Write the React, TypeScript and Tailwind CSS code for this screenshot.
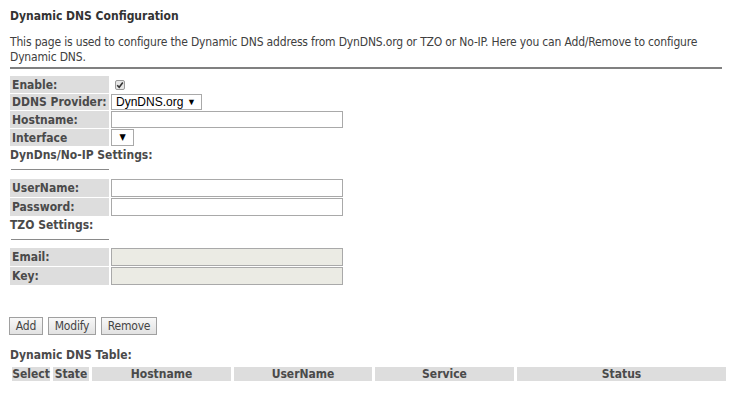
import React from 'react';

const font = 'font-["DejaVu_Sans_Condensed","DejaVu_Sans",sans-serif]';

const Label: React.FC<{ children: React.ReactNode; h?: string }> = ({ children, h = 'h-[17px]' }) => (
  <td className={`w-[99px] ${h} bg-[#dddddd] px-[2px] align-middle font-bold text-[#4a4a4a] whitespace-nowrap leading-none`}>
    {children}
  </td>
);

const TextBox: React.FC<{ disabled?: boolean }> = ({ disabled }) => (
  <div
    className={`w-[232px] h-[18px] border border-[#a9a9a9] ${disabled ? 'bg-[#ebebe4]' : 'bg-white'}`}
  />
);

const Caret = () => <span className="text-[9px] text-black leading-none">▼</span>;

const SectionTitle: React.FC<{ children: React.ReactNode }> = ({ children }) => (
  <div className="pt-[1px]">
    <div className="font-bold text-[#4a4a4a] leading-[15px]">{children}</div>
    <div className="ml-[1px] mt-[6px] w-[98px] h-px bg-[#8a8a8a]" />
  </div>
);

const Btn: React.FC<{ children: React.ReactNode; w: string }> = ({ children, w }) => (
  <button
    className={`${w} h-[18px] border border-[#a0a0a0] bg-gradient-to-b from-[#f8f8f8] to-[#e2e2e2] text-[#444] text-[12px] tracking-[-0.2px] leading-none flex items-center justify-center`}
  >
    {children}
  </button>
);

export default function App() {
  return (
    <div className={`${font} w-[736px] h-[395px] bg-white text-[12px] text-[#404040] pl-[10px] pt-[9px] overflow-hidden leading-none`}>
      <h1 className="font-bold text-[#333] leading-[15px]">Dynamic DNS Configuration</h1>
      <p className="mt-[11px] w-[712px] leading-[15px] tracking-[-0.17px]">
        This page is used to configure the Dynamic DNS address from DynDNS.org or TZO or No-IP. Here you can Add/Remove to configure Dynamic DNS.
      </p>
      <div className="mt-[2px] w-[712px] h-[2px] bg-[#808080]" />

      <table className="mt-[6px] -ml-[2px] border-separate border-spacing-x-[2px] border-spacing-y-[1px]">
        <tbody>
          <tr>
            <Label>Enable:</Label>
            <td className="pl-[4px] align-middle">
              <span className="flex w-[10px] h-[10px] border border-[#9a9a9a] rounded-[2px] bg-[#e6e6e6] items-center justify-center">
                <svg width="8" height="8" viewBox="0 0 8 8">
                  <path d="M1.2 4.2 L3.2 6.2 L6.8 1.6" fill="none" stroke="#333" strokeWidth="1.6" />
                </svg>
              </span>
            </td>
          </tr>
          <tr>
            <Label h="h-[16px]">DDNS Provider:</Label>
            <td className="align-middle">
              <div className='w-[91px] h-[16px] border border-[#a9a9a9] bg-white flex items-center pl-[4px] pr-[5px] justify-between font-["Liberation_Sans",Arial,sans-serif] text-[12px] text-black leading-none'>
                <span>DynDNS.org</span>
                <Caret />
              </div>
            </td>
          </tr>
          <tr>
            <Label>Hostname:</Label>
            <td className="align-middle">
              <div className="w-[232px] h-[17px] border border-[#a9a9a9] bg-white" />
            </td>
          </tr>
          <tr>
            <Label>Interface</Label>
            <td className="align-middle">
              <div className="w-[23px] h-[17px] border border-[#a9a9a9] bg-white flex items-center justify-center">
                <Caret />
              </div>
            </td>
          </tr>
        </tbody>
      </table>

      <SectionTitle>DynDns/No-IP Settings:</SectionTitle>

      <table className="mt-[8px] -ml-[2px] border-separate border-spacing-x-[2px] border-spacing-y-[1px]">
        <tbody>
          <tr>
            <Label h="h-[18px]">UserName:</Label>
            <td><TextBox /></td>
          </tr>
          <tr>
            <Label h="h-[18px]">Password:</Label>
            <td><TextBox /></td>
          </tr>
        </tbody>
      </table>

      <SectionTitle>TZO Settings:</SectionTitle>

      <table className="mt-[7px] -ml-[2px] border-separate border-spacing-x-[2px] border-spacing-y-[1px]">
        <tbody>
          <tr>
            <Label h="h-[18px]">Email:</Label>
            <td><TextBox disabled /></td>
          </tr>
          <tr>
            <Label h="h-[18px]">Key:</Label>
            <td><TextBox disabled /></td>
          </tr>
        </tbody>
      </table>

      <div className="mt-[31px] -ml-[1px] flex gap-[5px]">
        <Btn w="w-[34px]">Add</Btn>
        <Btn w="w-[48px]">Modify</Btn>
        <Btn w="w-[56px]">Remove</Btn>
      </div>

      <div className="mt-[13px] font-bold text-[#4a4a4a] leading-[15px]">Dynamic DNS Table:</div>

      <table className="mt-[4px] ml-[-1px] border-separate border-spacing-x-[3px] border-spacing-y-0 table-fixed w-[720px]">
        <thead>
          <tr className="font-bold text-[#4a4a4a]">
            <th className="w-[38px] h-[14px] bg-[#dddddd] leading-none font-bold">Select</th>
            <th className="w-[36px] bg-[#dddddd] leading-none font-bold">State</th>
            <th className="w-[139px] bg-[#dddddd] leading-none font-bold">Hostname</th>
            <th className="w-[138px] bg-[#dddddd] leading-none font-bold">UserName</th>
            <th className="w-[139px] bg-[#dddddd] leading-none font-bold">Service</th>
            <th className="bg-[#dddddd] leading-none font-bold">Status</th>
          </tr>
        </thead>
      </table>
    </div>
  );
}
